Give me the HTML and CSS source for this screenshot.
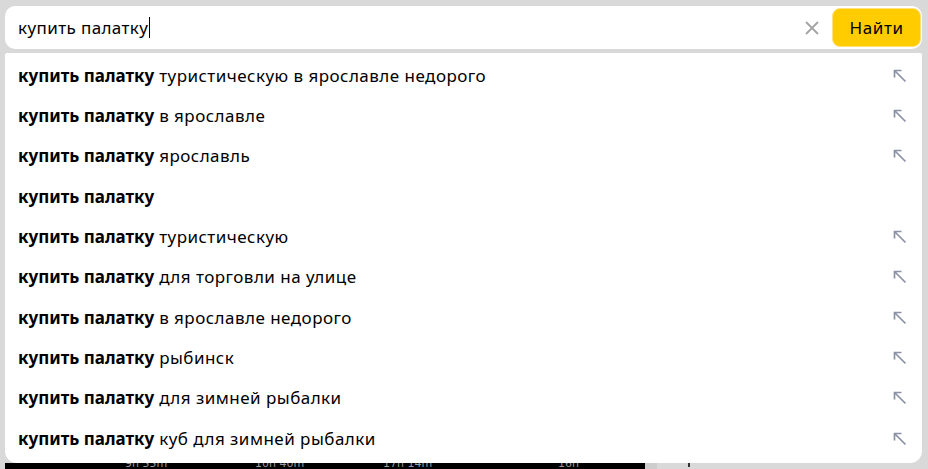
FILE: index.html
```html
<!DOCTYPE html>
<html lang="ru">
<head>
    <meta charset="UTF-8">
    <meta name="viewport" content="width=device-width, initial-scale=1.0">
    <title>купить палатку</title>
    <link rel="stylesheet" href="styles.css">
</head>
<body>
    <div class="page">
        <form class="search">
            <div class="search-input">
                <span class="query">купить палатку</span><span class="caret"></span>
            </div>
            <button type="button" class="clear" aria-label="Очистить">
                <svg width="14" height="14" viewBox="0 0 14 14"><path d="M1 1 L13 13 M13 1 L1 13" stroke="#a3a3a3" stroke-width="1.8" fill="none"/></svg>
            </button>
            <button type="submit" class="search-btn">Найти</button>
        </form>

        <ul class="suggest">
            <li class="item"><span><b>купить палатку</b> туристическую в ярославле недорого</span><i class="fill"></i></li>
            <li class="item"><span><b>купить палатку</b> в ярославле</span><i class="fill"></i></li>
            <li class="item"><span><b>купить палатку</b> ярославль</span><i class="fill"></i></li>
            <li class="item"><span><b>купить палатку</b></span></li>
            <li class="item"><span><b>купить палатку</b> туристическую</span><i class="fill"></i></li>
            <li class="item"><span><b>купить палатку</b> для торговли на улице</span><i class="fill"></i></li>
            <li class="item"><span><b>купить палатку</b> в ярославле недорого</span><i class="fill"></i></li>
            <li class="item"><span><b>купить палатку</b> рыбинск</span><i class="fill"></i></li>
            <li class="item"><span><b>купить палатку</b> для зимней рыбалки</span><i class="fill"></i></li>
            <li class="item"><span><b>купить палатку</b> куб для зимней рыбалки</span><i class="fill"></i></li>
        </ul>

        <div class="below">
            <div class="video">
                <span class="dur d1">9h 55m</span>
                <span class="dur d2">10h 40m</span>
                <span class="dur d3">17h 14m</span>
                <span class="dur d4">16h</span>
            </div>
            <div class="edge"></div>
            <div class="rest"><span class="tick"></span></div>
        </div>
    </div>

    <script>
        // стрелка "подставить в строку" для каждой подсказки
        const arrow = '<svg width="15" height="15" viewBox="0 0 15 15"><path d="M2.5 2.5 L13.5 13.5 M2.5 9.5 L2.5 2.5 L9.5 2.5" stroke="#8b92a6" stroke-width="1.7" fill="none"/></svg>';
        document.querySelectorAll('.fill').forEach(el => {
            el.innerHTML = arrow;
        });
    </script>
</body>
</html>
```

FILE: styles.css
```css
html, body {
    margin: 0;
    padding: 0;
}
body {
    font-family: "Noto Sans", "Open Sans", sans-serif;
    background-color: #d9d9d9;
    color: #000;
    overflow: hidden;
}
.page {
    width: 928px;
    height: 469px;
    padding-top: 6px;
    box-sizing: border-box;
}
.search {
    display: flex;
    align-items: center;
    margin: 0 6px 0 5px;
    height: 43px;
    background-color: #fff;
    border-radius: 10px;
    padding: 0 1px 0 13px;
}
.search-input {
    flex: 1;
    display: flex;
    align-items: center;
    font-size: 17px;
    letter-spacing: 0.4px;
}
.query {
    line-height: 20px;
}
.caret {
    display: inline-block;
    width: 1px;
    height: 21px;
    background-color: #000;
    margin-left: 1px;
}
.clear {
    width: 28px;
    height: 28px;
    border: none;
    background: none;
    padding: 0;
    margin-right: 6px;
    display: flex;
    align-items: center;
    justify-content: center;
}
.search-btn {
    width: 89px;
    height: 39px;
    background-color: #ffcc00;
    border: 1px solid #ffe27a;
    border-radius: 8px;
    font-family: inherit;
    font-size: 17px;
    letter-spacing: 0.6px;
    color: #000;
    padding: 0;
}
.suggest {
    list-style: none;
    margin: 4px 6px 0 5px;
    padding: 2px 0 0 0;
    background-color: #fff;
    border-radius: 2px 2px 12px 12px;
    height: 410px;
    box-sizing: border-box;
}
.item {
    height: 40.33px;
    display: flex;
    align-items: center;
    justify-content: space-between;
    padding: 0 15px 0 13px;
    font-size: 17px;
    letter-spacing: 0.47px;
}
.item b {
    font-weight: 700;
    letter-spacing: 0;
}
.fill {
    display: flex;
    width: 15px;
    height: 15px;
}
.below {
    display: flex;
    height: 6px;
    overflow: hidden;
    padding-left: 5px;
}
.video {
    width: 640px;
    background-color: #000;
    position: relative;
}
.dur {
    position: absolute;
    top: -6px;
    font-size: 11px;
    color: #9a9a9a;
    font-family: "DejaVu Sans", sans-serif;
}
.d1 { left: 120px; }
.d2 { left: 250px; }
.d3 { left: 378px; }
.d4 { left: 553px; }
.edge {
    width: 12px;
    background-color: #cdcdcd;
}
.rest {
    flex: 1;
    position: relative;
}
.tick {
    position: absolute;
    left: 31px;
    top: 0;
    width: 2px;
    height: 4px;
    background-color: #333;
}
```
